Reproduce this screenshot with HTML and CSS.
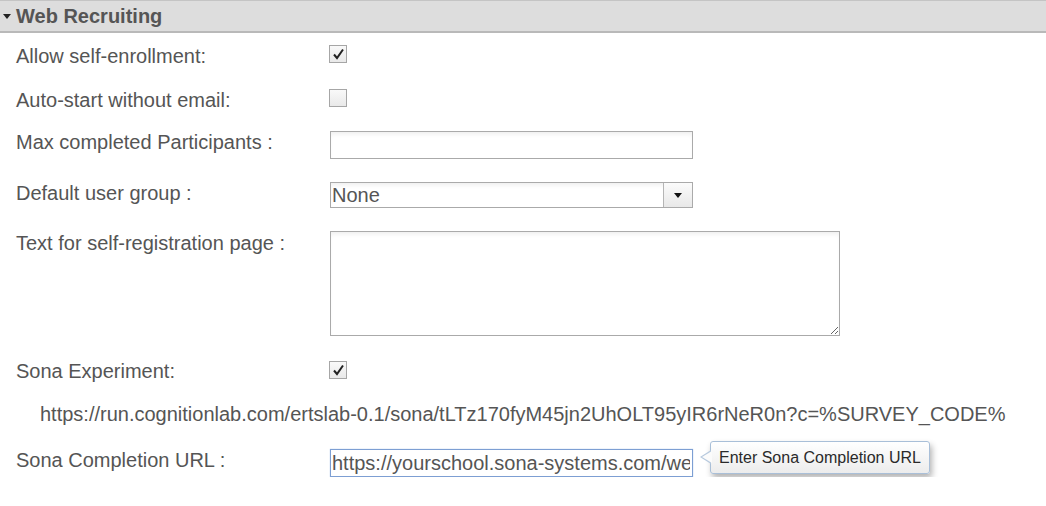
FILE: index.html
```html
<!DOCTYPE html>
<html>
<head>
<meta charset="utf-8">
<link rel="stylesheet" href="styles.css">
</head>
<body>
<div class="panel">
  <div class="panel-head">
    <span class="caret"></span>
    <span class="panel-title">Web Recruiting</span>
  </div>
  <div class="form">
    <div class="row r1">
      <div class="label">Allow self-enrollment:</div>
      <div class="ctrl"><span class="check"><svg width="13" height="12" viewBox="0 0 13 12"><path d="M2 6.5 L5 10 L11 1.5" fill="none" stroke="#222" stroke-width="2"/></svg></span></div>
    </div>
    <div class="row r2">
      <div class="label">Auto-start without email:</div>
      <div class="ctrl"><span class="check"></span></div>
    </div>
    <div class="row r3">
      <div class="label">Max completed Participants :</div>
      <div class="ctrl"><input class="text-in" type="text" value=""></div>
    </div>
    <div class="row r4">
      <div class="label">Default user group :</div>
      <div class="ctrl">
        <div class="select"><span class="select-val">None</span><span class="select-btn"><span class="tri"></span></span></div>
      </div>
    </div>
    <div class="row r5">
      <div class="label">Text for self-registration page :</div>
      <div class="ctrl"><textarea class="area"></textarea></div>
    </div>
    <div class="row r6">
      <div class="label">Sona Experiment:</div>
      <div class="ctrl"><span class="check"><svg width="13" height="12" viewBox="0 0 13 12"><path d="M2 6.5 L5 10 L11 1.5" fill="none" stroke="#222" stroke-width="2"/></svg></span></div>
    </div>
    <div class="row r7">
      <div class="url">https://run.cognitionlab.com/ertslab-0.1/sona/tLTz170fyM45jn2UhOLT95yIR6rNeR0n?c=%SURVEY_CODE%</div>
    </div>
    <div class="row r8">
      <div class="label">Sona Completion URL :</div>
      <div class="ctrl tip-host">
        <input class="text-in focus" type="text" value="https://yourschool.sona-systems.com/webstudy_credit.aspx">
        <div class="tooltip">Enter Sona Completion URL</div>
      </div>
    </div>
  </div>
</div>
</body>
</html>
```

FILE: styles.css
```css
html, body {
  margin: 0;
  padding: 0;
  background: #ffffff;
}
body {
  font-family: "Liberation Sans", Arial, sans-serif;
  color: #555555;
  font-size: 20px;
}
.panel-head {
  height: 30px;
  background: #dddddd;
  border-top: 1px solid #c4c4c4;
  border-bottom: 2px solid #b9b9b9;
  display: flex;
  align-items: center;
}
.caret {
  width: 0;
  height: 0;
  border-left: 4px solid transparent;
  border-right: 4px solid transparent;
  border-top: 5px solid #222;
  margin-left: 3px;
  margin-right: 5px;
  margin-top: 1px;
}
.panel-title {
  font-weight: bold;
  font-size: 20px;
  color: #555555;
}
.form {
  display: flex;
  flex-direction: column;
}
.row {
  display: flex;
  align-items: flex-start;
}
.label {
  width: 330px;
  padding-left: 16px;
  line-height: 22px;
  box-sizing: border-box;
  flex: none;
}
.ctrl {
  flex: none;
}
.r1 { margin-top: 11px; }
.r2 { margin-top: 21px; }
.r3 { margin-top: 20px; }
.r4 { margin-top: 23px; }
.r5 { margin-top: 23px; }
.r6 { margin-top: 23px; }
.r7 { margin-top: 21px; }
.r8 { margin-top: 24px; }

.r1 .label, .r2 .label, .r6 .label { margin-top: 1px; }
.r1 .ctrl, .r2 .ctrl { padding-top: 1px; }
.r5 .label { margin-top: 1px; }
.r6 .ctrl { padding-top: 2px; }

.check {
  display: flex;
  align-items: center;
  justify-content: center;
  width: 16px;
  height: 16px;
  margin-left: -1px;
  border: 1px solid #a6a6a6;
  background: linear-gradient(#f9f9f9, #e9e9e9);
}
.check svg { display: block; }

.text-in {
  display: block;
  width: 363px;
  height: 28px;
  box-sizing: border-box;
  border: 1px solid #aaaaaa;
  margin: 0;
  padding: 0 2px 0 1px;
  font-family: "Liberation Sans", Arial, sans-serif;
  font-size: 20px;
  color: #555555;
  background: #ffffff;
  box-shadow: inset 0 4px 5px -2px rgba(0,0,0,0.07);
  outline: none;
}
.text-in.focus {
  border-color: #7d9fd3;
  box-shadow: 0 0 1px #9fbbe6;
}
.select {
  display: flex;
  width: 363px;
  height: 26px;
  box-sizing: border-box;
  border: 1px solid #aaaaaa;
  background: #ffffff;
  box-shadow: inset 0 4px 5px -2px rgba(0,0,0,0.07);
}
.select-val {
  flex: 1;
  line-height: 24px;
  padding-left: 1px;
  color: #555555;
}
.select-btn {
  width: 28px;
  border-left: 1px solid #b5b5b5;
  background: linear-gradient(#fbfbfb, #e8e8e8);
  display: flex;
  align-items: center;
  justify-content: center;
}
.tri {
  width: 0;
  height: 0;
  border-left: 4px solid transparent;
  border-right: 4px solid transparent;
  border-top: 5px solid #111;
}
.area {
  display: block;
  width: 510px;
  height: 105px;
  box-sizing: border-box;
  border: 1px solid #aaaaaa;
  margin: 0;
  resize: both;
  font-family: "Liberation Sans", Arial, sans-serif;
  font-size: 16px;
  background: #ffffff;
  box-shadow: inset 0 4px 5px -2px rgba(0,0,0,0.07);
}
.url {
  padding-left: 40px;
  line-height: 22px;
  color: #555555;
  white-space: nowrap;
}
.tip-host {
  position: relative;
}
.tooltip {
  position: absolute;
  left: 380px;
  top: -8px;
  height: 33px;
  box-sizing: border-box;
  padding: 0 8px;
  line-height: 31px;
  white-space: nowrap;
  font-size: 16px;
  color: #2a2a2a;
  border: 1px solid #a9bfd8;
  border-radius: 3px;
  background: linear-gradient(#ffffff, #ececec);
  box-shadow: 2px 4px 6px rgba(0,0,0,0.3);
}
.tooltip::before {
  content: "";
  position: absolute;
  left: -11px;
  top: 8px;
  border-top: 7px solid transparent;
  border-bottom: 7px solid transparent;
  border-right: 11px solid #b7c9de;
}
.tooltip::after {
  content: "";
  position: absolute;
  left: -9px;
  top: 9px;
  border-top: 6px solid transparent;
  border-bottom: 6px solid transparent;
  border-right: 10px solid #fbfbfb;
}
```
